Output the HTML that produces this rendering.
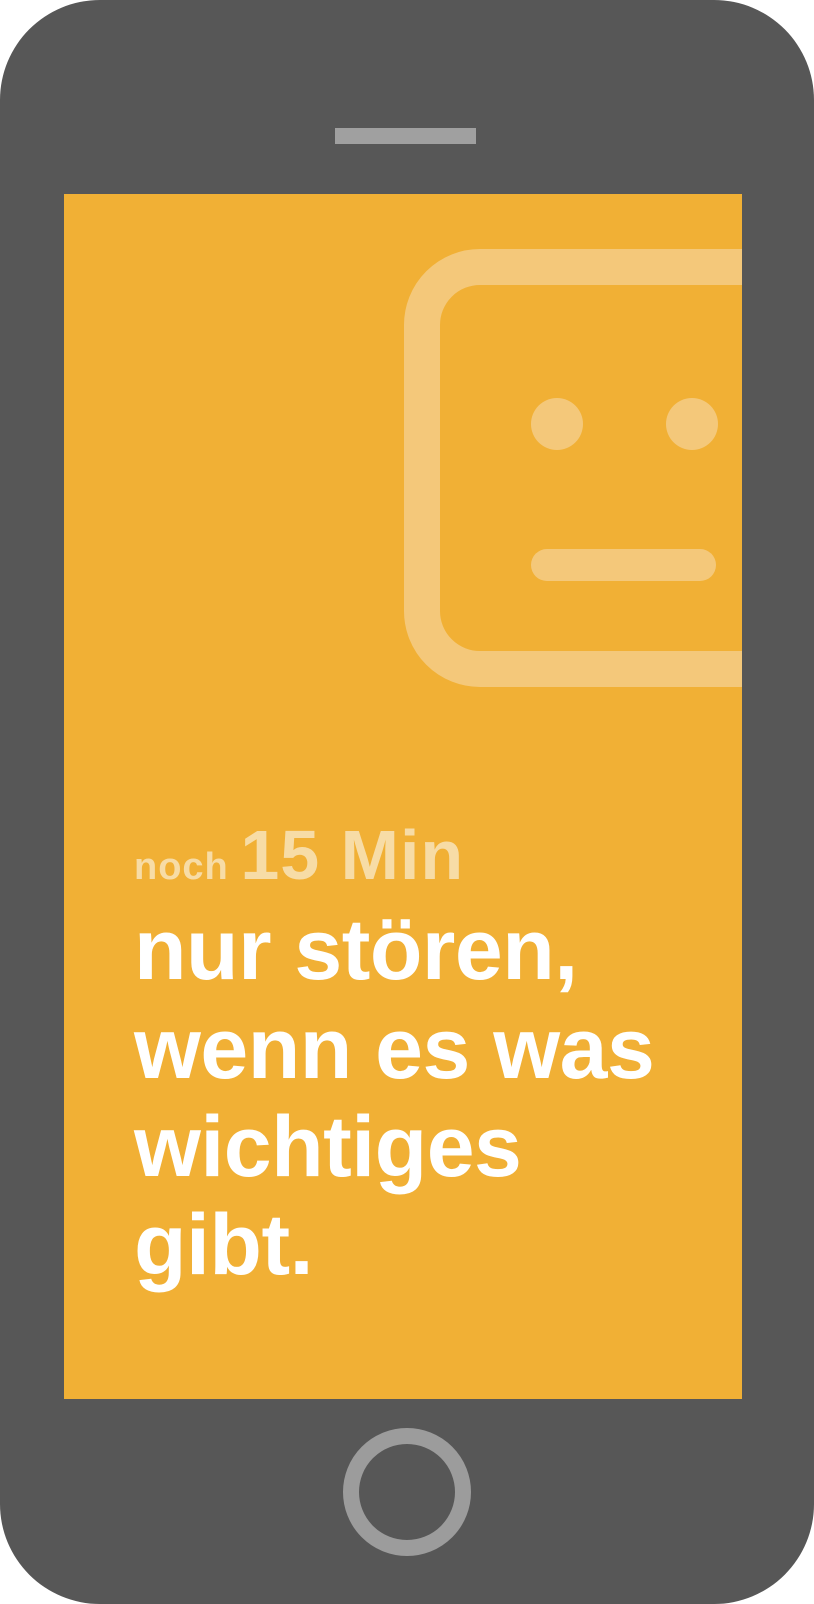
<!DOCTYPE html>
<html><head><style>
body{margin:0;width:814px;height:1604px;background:#fff;position:relative;overflow:hidden;font-family:"Liberation Sans",sans-serif}
.phone{position:absolute;left:0;top:0;width:814px;height:1604px;background:#575757;border-radius:100px}
.spk{position:absolute;left:335px;top:128px;width:141px;height:16px;background:#a0a0a0}
.screen{position:absolute;left:64px;top:194px;width:678px;height:1205px;background:#f1b035;overflow:hidden}
.home{position:absolute;left:343px;top:1428px;width:96px;height:96px;border:16px solid #9c9c9c;border-radius:50%}
.t{position:absolute;left:70px;color:#fff;font-weight:bold;font-size:86px;letter-spacing:-0.5px;white-space:nowrap;line-height:1}
</style></head><body>
<div class="phone"></div>
<div class="spk"></div>
<div class="screen">
<svg width="678" height="1205" style="position:absolute;left:0;top:0">
<rect x="358" y="73" width="400" height="402" rx="58" fill="none" stroke="#f4c87a" stroke-width="36"/>
<circle cx="493" cy="230" r="26" fill="#f4c87a"/>
<circle cx="628" cy="230" r="26" fill="#f4c87a"/>
<line x1="483" y1="371" x2="636" y2="371" stroke="#f4c87a" stroke-width="32" stroke-linecap="round"/>
</svg>
<div class="t" style="top:630px;font-size:38px;letter-spacing:1px;color:#f7dca6;line-height:62px">noch <span style="font-size:70px;letter-spacing:1px">15 Min</span></div>
<div class="t" style="top:713px">nur stören,</div>
<div class="t" style="top:812px">wenn es was</div>
<div class="t" style="top:910px">wichtiges</div>
<div class="t" style="top:1008px">gibt.</div>
</div>
<div class="home"></div>
</body></html>
